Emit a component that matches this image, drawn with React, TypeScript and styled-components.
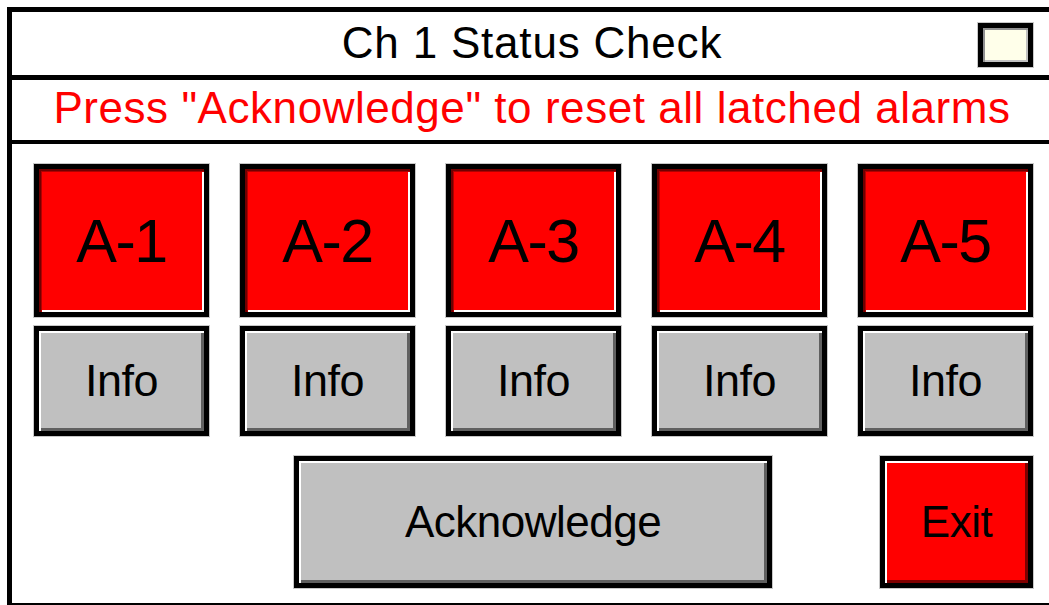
import styled, { createGlobalStyle, css } from "styled-components"

const GlobalStyle = createGlobalStyle`
  html, body {
    margin: 0;
    padding: 0;
    background: #fff;
    overflow: hidden;
  }
  body {
    font-family: "Liberation Sans", Arial, sans-serif;
    color: #000;
  }
`

type Tone = "red" | "gray"

const alarms = ["A-1", "A-2", "A-3", "A-4", "A-5"]

// raised look: light top-left, dark bottom-right
const raised = (dark: string) => css`
  box-shadow:
    0 0 0 1px #c8c8c8,
    inset 2px 2px 0 #fff,
    inset -3px -3px 0 ${dark};
`

export default function App() {
  return (
    <>
      <GlobalStyle />
      <Panel>
        <TitleBar>
          <span />
          <Title>Ch 1 Status Check</Title>
          <Indicator />
        </TitleBar>

        <Notice>Press "Acknowledge" to reset all latched alarms</Notice>

        <Body>
          <AlarmGrid>
            {alarms.map(a => (
              <AlarmTile key={a}>{a}</AlarmTile>
            ))}
            {alarms.map(a => (
              <Key key={"info-" + a} $tone="gray" $height={110} $fontSize={45}>
                Info
              </Key>
            ))}
          </AlarmGrid>

          <Actions>
            <Key $tone="gray" $width={478} $height={132} $fontSize={44}>
              Acknowledge
            </Key>
            <Key $tone="red" $width={153} $height={132} $fontSize={44}>
              Exit
            </Key>
          </Actions>
        </Body>
      </Panel>
    </>
  )
}

const Panel = styled.div`
  box-sizing: border-box;
  margin: 7px 0 0 7px;
  width: 1050px;
  height: 601px;
  border: 5px solid #000;
  display: flex;
  flex-direction: column;
`

const TitleBar = styled.div`
  box-sizing: border-box;
  height: 68px;
  border-bottom: 5px solid #000;
  display: grid;
  grid-template-columns: 1fr auto 1fr;
  align-items: center;
`

const Title = styled.h1`
  margin: 0;
  font-size: 44px;
  font-weight: 400;
  line-height: 1;
  letter-spacing: 0.8px;
  padding-bottom: 2px;
`

const Indicator = styled.div`
  box-sizing: border-box;
  justify-self: end;
  align-self: start;
  margin: 11px 19px 0 0;
  width: 55px;
  height: 44px;
  border: 5px solid #000;
  background: #ffffea;
  box-shadow:
    0 0 0 1px #c8c8c8,
    inset 2px 2px 0 #909090,
    inset -2px -2px 0 #c0c0c0;
`

const Notice = styled.div`
  box-sizing: border-box;
  height: 64px;
  border-bottom: 4px solid #000;
  display: flex;
  align-items: center;
  justify-content: center;
  padding-bottom: 4px;
  color: #ff0000;
  font-size: 44px;
  letter-spacing: 0.55px;
  white-space: nowrap;
`

const Body = styled.div`
  padding: 20px 0 0 22px;
`

const AlarmGrid = styled.div`
  display: grid;
  grid-template-columns: repeat(5, 175px);
  grid-template-rows: 153px 110px;
  column-gap: 31px;
  row-gap: 9px;
`

const Face = css`
  box-sizing: border-box;
  border: 5px solid #000;
  display: flex;
  align-items: center;
  justify-content: center;
  white-space: nowrap;
`

// latched alarm: sunken red tile
const AlarmTile = styled.div`
  ${Face};
  background: #ff0000;
  font-size: 61px;
  letter-spacing: -1.5px;
  box-shadow:
    0 0 0 1px #c8c8c8,
    inset 2px 2px 0 #700000,
    inset 3px 3px 0 #b00000,
    inset -2px -2px 0 #fff;
`

const Key = styled.div<{ $tone: Tone; $width?: number; $height: number; $fontSize: number }>`
  ${Face};
  width: ${p => (p.$width ? `${p.$width}px` : "auto")};
  height: ${p => p.$height}px;
  font-size: ${p => p.$fontSize}px;
  letter-spacing: -0.5px;
  background: ${p => (p.$tone === "red" ? "#ff0000" : "#c0c0c0")};
  ${p => raised(p.$tone === "red" ? "#800000" : "#606060")};
`

const Actions = styled.div`
  width: 999px;
  margin-top: 20px;
  display: flex;
  justify-content: flex-end;
  gap: 108px;
`
